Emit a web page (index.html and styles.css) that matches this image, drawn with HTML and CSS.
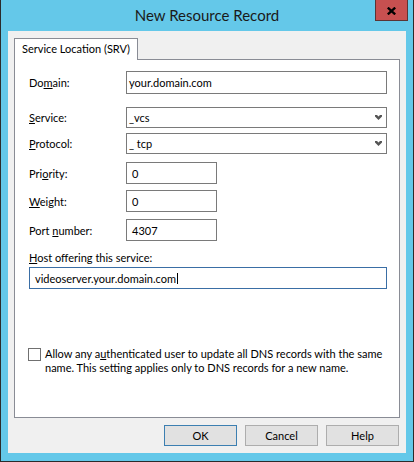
FILE: index.html
```html
<!DOCTYPE html>
<html>
<head>
<meta charset="utf-8">
<title>New Resource Record</title>
<link rel="stylesheet" href="styles.css">
</head>
<body>
<div class="window">
  <div class="titlebar">
    <span class="title">New Resource Record</span>
    <div class="close">
      <svg width="9" height="8" viewBox="0 0 9 8"><path d="M0.8 0.6 L8.2 7.4 M8.2 0.6 L0.8 7.4" stroke="#000" stroke-width="2.3" fill="none"/></svg>
    </div>
  </div>
  <div class="client">
    <div class="tabs"><div class="tab">Service Location (SRV)</div></div>
    <div class="panel">
      <div class="row r-domain">
        <span class="lbl">Do<u>m</u>ain:</span>
        <div class="edit wide domain">your.domain.com</div>
      </div>
      <div class="row r-service">
        <span class="lbl"><u>S</u>ervice:</span>
        <div class="combo wide"><span>_vcs</span>
          <svg class="chev" width="7" height="5" viewBox="0 0 7 5"><polygon points="0,0 2,0 3.5,1.6 5,0 7,0 7,1.4 3.5,5 0,1.4" fill="#555"/></svg>
        </div>
      </div>
      <div class="row r-protocol">
        <span class="lbl"><u>P</u>rotocol:</span>
        <div class="combo wide"><span>_ tcp</span>
          <svg class="chev" width="7" height="5" viewBox="0 0 7 5"><polygon points="0,0 2,0 3.5,1.6 5,0 7,0 7,1.4 3.5,5 0,1.4" fill="#555"/></svg>
        </div>
      </div>
      <div class="row r-priority">
        <span class="lbl">Pri<u>o</u>rity:</span>
        <div class="edit small">0</div>
      </div>
      <div class="row r-weight">
        <span class="lbl"><u>W</u>eight:</span>
        <div class="edit small">0</div>
      </div>
      <div class="row r-port">
        <span class="lbl">Port <u>n</u>umber:</span>
        <div class="edit small">4307</div>
      </div>
      <div class="host-label"><u>H</u>ost offering this service:</div>
      <div class="edit host">videoserver.your.domain.com<span class="caret"></span></div>
      <div class="check-row">
        <span class="checkbox"></span>
        <span class="check-text">Allow any a<u>u</u>thenticated user to update all DNS records with the same<br>name. This setting applies only to DNS records for a new name.</span>
      </div>
    </div>
    <div class="buttons">
      <div class="btn default">OK</div>
      <div class="btn">Cancel</div>
      <div class="btn">Help</div>
    </div>
  </div>
</div>
</body>
</html>
```

FILE: styles.css
```css
* { box-sizing: border-box; }
html, body { margin: 0; padding: 0; }
body {
  font-family: "Segoe UI", Lato, "Liberation Sans", sans-serif;
  font-size: 11px;
  color: #000;
  background: #64c8e9;
}
.window {
  width: 414px;
  height: 462px;
  background: #64c8e9;
  border-left: 1px solid #2b2b2b;
  border-right: 1px solid #2b2b2b;
  border-bottom: 1px solid #2b2b2b;
  display: flex;
  flex-direction: column;
}
.titlebar {
  height: 31px;
  display: grid;
  grid-template-columns: 1fr auto 1fr;
  align-items: start;
}
.title {
  grid-column: 2;
  font-size: 15px;
  line-height: 31px;
  color: #1a1a1a;
}
.close {
  grid-column: 3;
  justify-self: end;
  margin-right: 5px;
  width: 33px;
  height: 21px;
  background: #c75050;
  border: 1px solid #5b3434;
  border-top: none;
  display: flex;
  align-items: center;
  justify-content: center;
  padding-top: 1px;
}
.client {
  margin: 0 7px;
  height: 422px;
  background: #f0f0f0;
  padding: 0 6px;
  display: flex;
  flex-direction: column;
}
.tabs {
  margin-top: 7px;
  display: flex;
  position: relative;
  z-index: 1;
  margin-bottom: -1px;
}
.tab {
  width: 124px;
  height: 22px;
  background: #fff;
  border: 1px solid #898c95;
  border-bottom: none;
  padding-left: 7px;
  line-height: 20px;
  white-space: nowrap;
}
.panel {
  height: 359px;
  background: #fff;
  border: 1px solid #898c95;
  padding: 11px 12px 0 14px;
  display: flex;
  flex-direction: column;
}
.row {
  display: flex;
  align-items: center;
}
.lbl {
  width: 97px;
  flex: none;
  white-space: nowrap;
}
.edit, .combo {
  border: 1px solid #7a7a7a;
  background: #fff;
  display: flex;
  align-items: center;
  white-space: nowrap;
}
.wide { width: 261px; }
.small { width: 91px; height: 22px; padding-left: 5px; }
.domain { height: 23px; padding-left: 2px; }
.combo { height: 21px; padding-left: 2px; padding-right: 4px; justify-content: space-between; }
.chev { flex: none; }
.r-service { margin-top: 13px; }
.r-protocol { margin-top: 5px; }
.r-priority { margin-top: 8px; }
.r-weight { margin-top: 6px; }
.r-port { margin-top: 7px; }
.host-label {
  margin-top: 9px;
  line-height: 15px;
}
.host {
  margin-top: 2px;
  width: 358px;
  height: 22px;
  padding-left: 5px;
  border-color: #3a6ea5;
}
.caret {
  display: inline-block;
  width: 1px;
  height: 11px;
  background: #000;
  margin-left: 1px;
}
.check-row {
  margin-top: 58px;
  margin-left: -1px;
  display: flex;
  align-items: flex-start;
  gap: 4px;
}
.checkbox {
  flex: none;
  width: 13px;
  height: 13px;
  border: 1px solid #707070;
  background: #fff;
  margin-top: 1px;
}
.check-text {
  line-height: 14px;
  white-space: nowrap;
}
.buttons {
  margin-top: 7px;
  margin-right: 1px;
  display: flex;
  justify-content: flex-end;
  gap: 8px;
}
.btn {
  width: 73px;
  height: 21px;
  background: #e1e1e1;
  border: 1px solid #adadad;
  display: flex;
  align-items: center;
  justify-content: center;
}
.btn.default { border-color: #3c7fb1; }
```
